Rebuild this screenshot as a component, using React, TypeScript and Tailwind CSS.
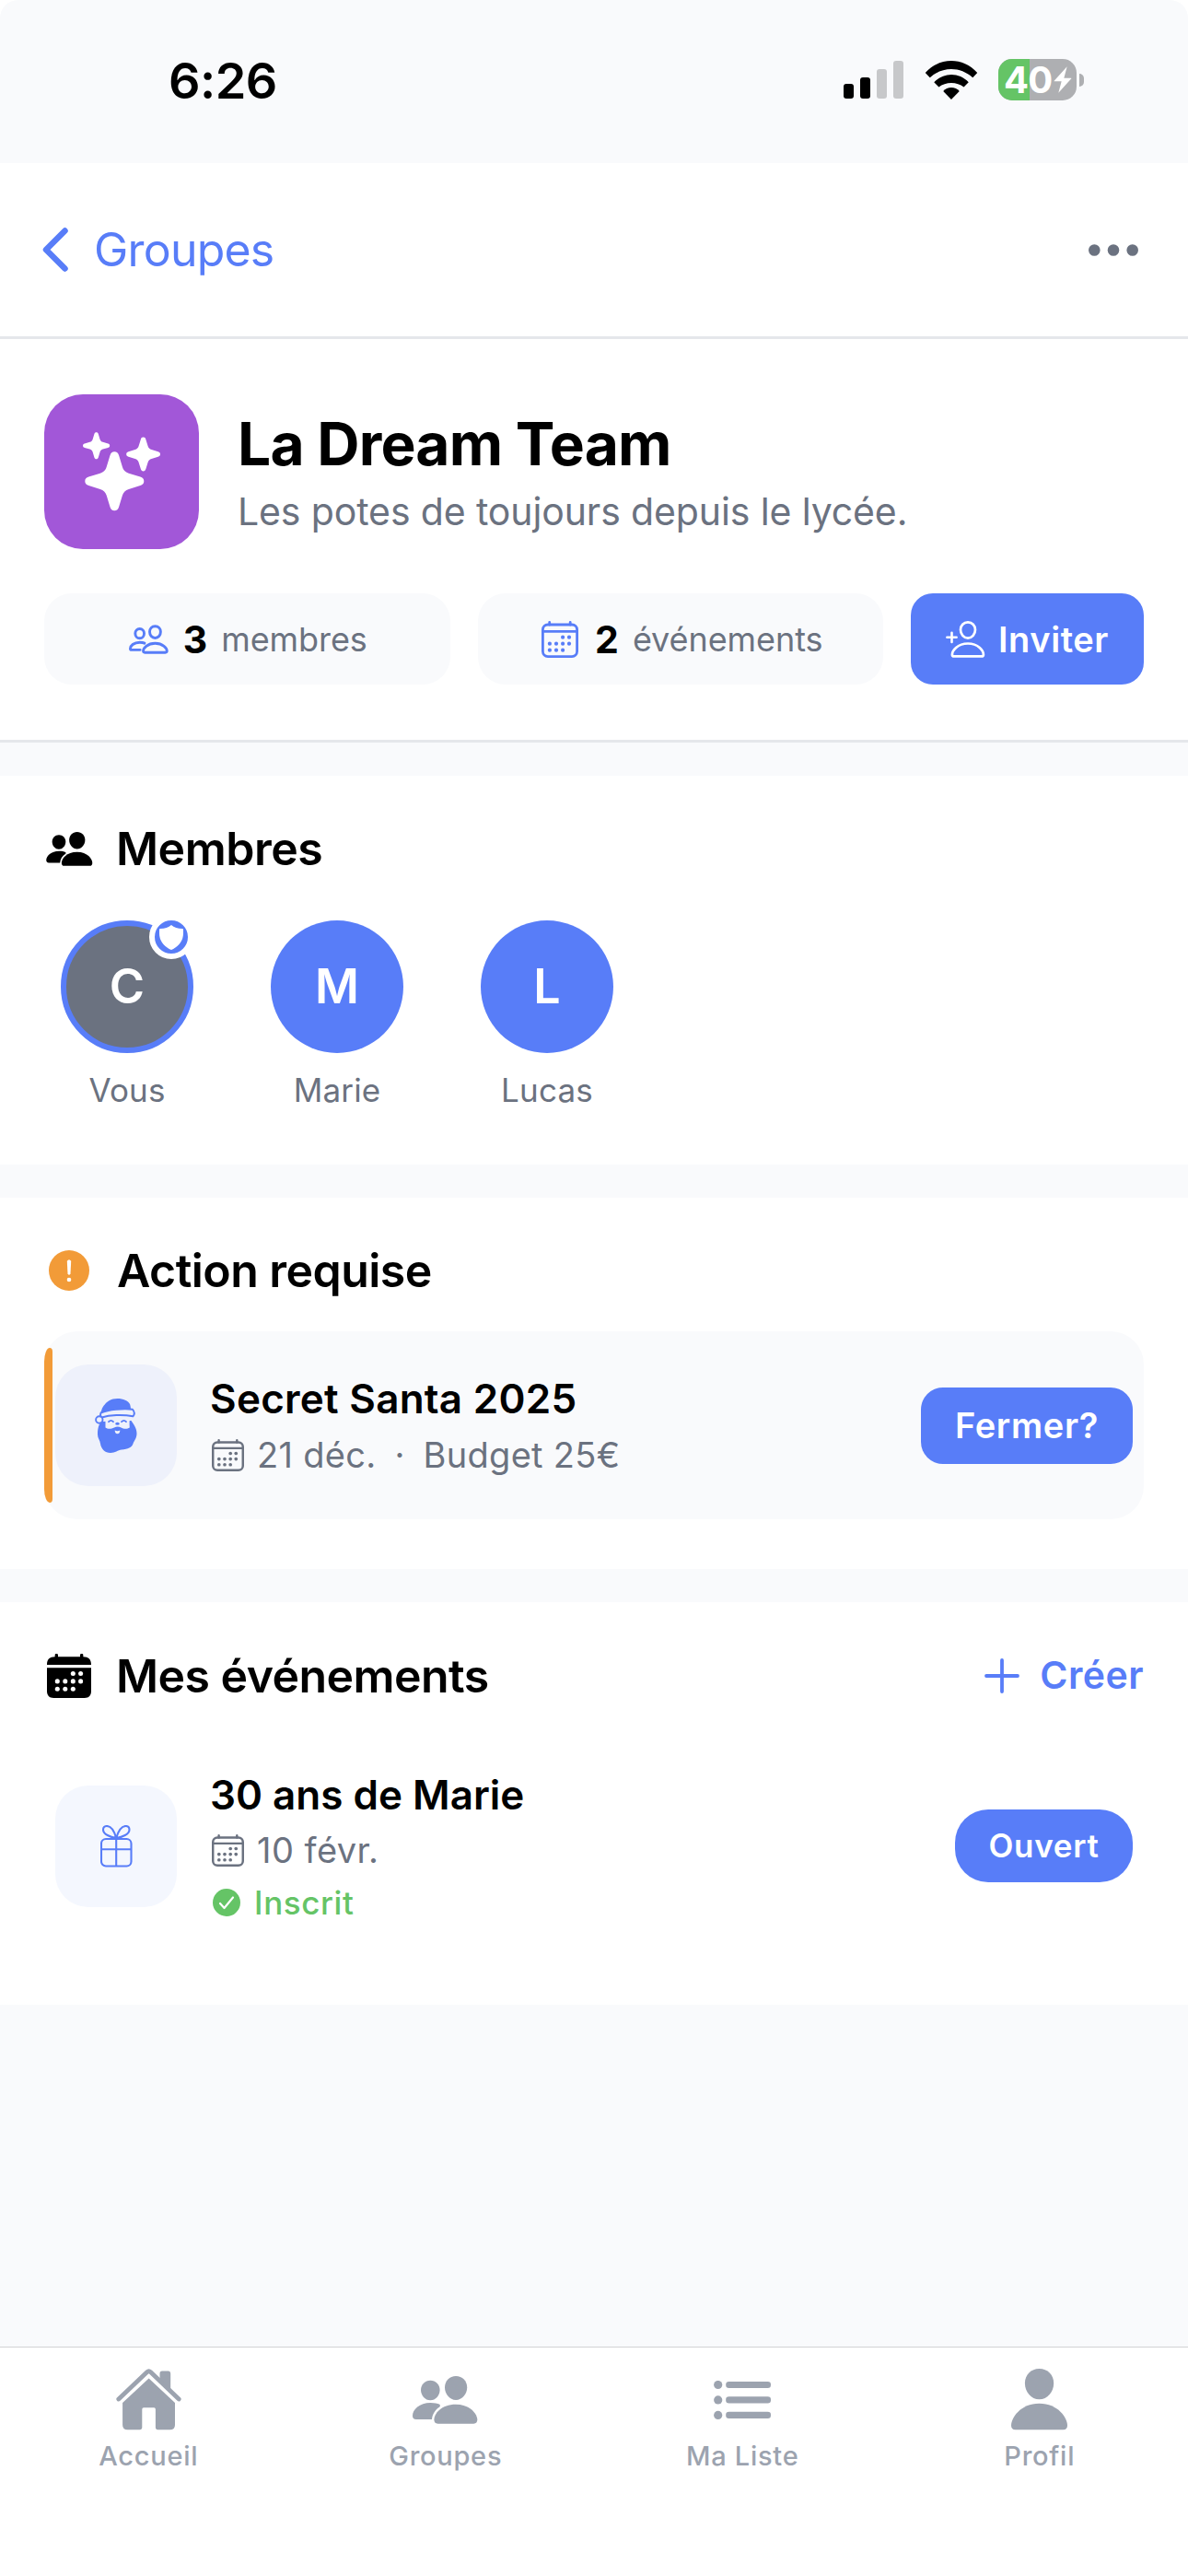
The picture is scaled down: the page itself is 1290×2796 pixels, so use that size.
import React from 'react'

type IconProps = { className?: string }

function PeopleFill({ className }: IconProps) {
  return (
    <svg viewBox="0 0 71 52" className={className} fill="currentColor">
      <path d="M47 0C54 0 59.2 5.4 59.2 12.3C59.2 19.5 53.8 26 47 26C40.3 26 35 19.5 35 12.3C35 5.4 40.2 0 47 0Z" />
      <path d="M19.3 4.7C25 4.7 29.6 9.2 29.6 15C29.6 21 25 26.3 19.3 26.3C13.6 26.3 9 21 9 15C9 9.2 13.6 4.7 19.3 4.7Z" />
      <path d="M27.5 51.7C24.5 51.7 23.4 49.8 23.4 47.3C23.4 41 31 30.7 47 30.7C63 30.7 70.3 41.5 70.3 47.3C70.3 50 69 51.7 66.3 51.7Z" />
      <path d="M4 47C1.2 47 0 45.6 0 43C0 36.5 7.5 29 19.5 29C23.6 29 27 29.7 29.4 30.8Q30.6 32 29.4 33.4C24 36.6 21.4 42 21 47Z" />
    </svg>
  )
}

function People({ className }: IconProps) {
  return (
    <svg viewBox="0 0 71 52" className={className} fill="none" stroke="currentColor" strokeWidth="4.8" strokeLinejoin="round" strokeLinecap="round">
      <path d="M47 2.4C53 2.4 56.8 6.8 56.8 12.5C56.8 18.6 52.6 23.6 47 23.6C41.4 23.6 37.2 18.6 37.2 12.5C37.2 6.8 41 2.4 47 2.4Z" />
      <path d="M19.3 7C24 7 27.3 10.5 27.3 15.2C27.3 20 24 24 19.3 24C14.6 24 11.3 20 11.3 15.2C11.3 10.5 14.6 7 19.3 7Z" />
      <path d="M28.5 49.4C26.2 49.4 25.7 48.3 25.7 46.8C25.7 42 33 33 47 33C61 33 68.1 42 68.1 46.8C68.1 48.3 67.500 49.4 65.2 49.4Z" />
      <path d="M20 44.800H5C2.9 44.800 2.4 44 2.4 42.500C2.4 37.500 8.500 31.300 19.500 31.300C23 31.300 26 31.800 28 32.800" />
    </svg>
  )
}

const dots = [
  [23.1, 17.7], [30, 17.7],
  [8.9, 24.7], [16, 24.7], [23.1, 24.7], [30, 24.7],
  [8.9, 31.7], [16, 31.7], [23.1, 31.7],
]

function Calendar({ className }: IconProps) {
  return (
    <svg viewBox="0 0 40 40" className={className} fill="none" stroke="currentColor" strokeWidth="2.8">
      <rect x="1.4" y="4" width="37.2" height="34.6" rx="5.5" />
      <path d="M1.4 11.3H38.5" />
      <path d="M8.7 1.4V4M31.200 1.4V4" strokeLinecap="round" />
      {dots.map(([x, y]) => (
        <circle key={x + '-' + y} cx={x} cy={y} r="2.1" fill="currentColor" stroke="none" />
      ))}
    </svg>
  )
}

function CalendarFill({ className }: IconProps) {
  return (
    <svg viewBox="0 0 40 40" className={className} fill="currentColor">
      <path d="M0 10C0 5 2.5 2.8 7.2 2.8V1.3A1.4 1.4 0 0 1 10 1.3V2.8H30V1.3A1.4 1.4 0 0 1 32.8 1.3V2.8C37.5 2.8 40 5 40 10Z" />
      <path d="M0 12.8H40V34C40 37.8 37.8 40 34 40H6C2.2 40 0 37.8 0 34Z" />
      {dots.map(([x, y]) => (
        <circle key={x + '-' + y} cx={x + 0.5} cy={y + 0.2} r="2.1" fill="white" />
      ))}
    </svg>
  )
}

function PersonAdd({ className }: IconProps) {
  return (
    <svg viewBox="0 0 43 40" className={className} fill="none" stroke="currentColor" strokeWidth="2.7" strokeLinecap="round" strokeLinejoin="round">
      <path d="M24 1.4C28.6 1.4 32 5 32 9.6C32 14.5 28.5 18.6 24 18.6C19.5 18.6 16 14.5 16 9.6C16 5 19.4 1.4 24 1.4Z" />
      <path d="M9 38.4C7.4 38.4 6.9 37.7 6.9 36.4C6.9 32.5 12.5 24.5 24 24.5C35.5 24.5 40.9 32.5 40.9 36.4C40.9 37.7 40.4 38.4 38.8 38.4Z" />
      <path d="M1.4 17.8H11.6M6.5 12.8V22.9" strokeWidth="2.6" />
    </svg>
  )
}

function Sparkles({ className }: IconProps) {
  const star =
    'M0 -32C2.5 -32 4 -30.6 4.8 -28L8.6 -15.5C9.6 -12 12 -9.6 15.5 -8.6L28 -4.8C30.6 -4 32 -2.5 32 0C32 2.5 30.6 4 28 4.8L15.5 8.6C12 9.6 9.6 12 8.6 15.5L4.8 28C4 30.6 2.5 32 0 32C-2.5 32 -4 30.6 -4.8 28L-8.6 15.5C-9.6 12 -12 9.6 -15.5 8.6L-28 4.8C-30.6 4 -32 2.5 -32 0C-32 -2.5 -30.6 -4 -28 -4.8L-15.5 -8.6C-12 -9.6 -9.6 -12 -8.6 -15.5L-4.8 -28C-4 -30.6 -2.5 -32 0 -32Z'
  return (
    <svg viewBox="48 428 168 168" className={className} fill="currentColor">
      <path d={star} transform="translate(124.3 522.3)" />
      <path d={star} transform="translate(104.6 483.7) scale(0.455)" />
      <path d={star} transform="translate(155.6 493) scale(0.575)" />
    </svg>
  )
}

function Santa({ className }: IconProps) {
  return (
    <svg viewBox="0 0 46 59" className={className}>
      <path fill="currentColor" d="M7 25C3.5 29 3 34 3 39C3 43 5.5 45 6 49C7 55 11 59 17 59C22 59 25 56 29 55.5C36 55 40 53 41.5 49C42.5 46 45.5 43 45.5 38C45.5 32 42 28 39.5 24Z" />
      <path fill="#eef1fb" d="M11.5 20C18 18.5 31 18 38 19.5C37.5 24 37.5 28 37.8 31.5C35 33.5 31 33 28.5 31.5C26 30 23.5 30 21 31.5C18 33 14 33.5 11.5 31.5Z" />
      <path fill="currentColor" d="M6.5 15C8 8 14 0 24.5 0C31 0 36 2.5 38 6C39 9 39 11 39 14Z" />
      <path fill="#eef1fb" stroke="currentColor" strokeWidth="1.9" d="M6.5 15.5C15 12 31 10.5 41 11.8C43 14 43.2 17 41.5 19.3C30 17 16 17.8 7.5 20.5C6 19.5 5.7 17.5 6.5 15.5Z" />
      <circle cx="4.8" cy="23" r="3.7" fill="#eef1fb" stroke="currentColor" strokeWidth="1.9" />
      <path fill="none" stroke="currentColor" strokeWidth="1.8" strokeLinecap="round" d="M15 25.2Q17.5 22.4 20 25.2M29 25.2Q31.5 22.4 34 25.2" />
      <ellipse cx="24.5" cy="27.2" rx="2.3" ry="1.5" fill="currentColor" />
      <path fill="#eef1fb" d="M21.7 34.5Q24.5 36 27.3 34.5Q27.3 38 24.5 38.3Q21.7 38 21.7 34.5Z" />
    </svg>
  )
}

function Gift({ className }: IconProps) {
  return (
    <svg viewBox="0 0 35 46" className={className} fill="none" stroke="currentColor" strokeWidth="2.1" strokeLinejoin="round">
      <rect x="1" y="15" width="32.5" height="29.5" rx="5" />
      <path d="M17.2 14V44.5M1 26.2H33.5" />
      <path d="M17.2 14C11 13 3 10 3 5C3 2.5 4.5 1 7 1C12 1 15.5 8 17.2 14C19 8 22.5 1 27.5 1C30 1 31.5 2.5 31.5 5C31.5 10 23.5 13 17.2 14Z" />
    </svg>
  )
}

function Home({ className }: IconProps) {
  return (
    <svg viewBox="0 0 71 67" className={className} fill="currentColor">
      <path d="M47.5 13V5Q47.5 2.5 50 2.5H57Q59.2 2.5 59.2 5V25Z" />
      <path d="M2.8 33L33.8 3.6Q35.6 2 37.4 3.6L68.2 33" fill="none" stroke="currentColor" strokeWidth="4.8" strokeLinecap="round" />
      <path d="M35.6 10.5L64 37V61Q64 66.3 58.5 66.3H45.5Q42.9 66.3 42.9 63.5V44Q42.9 42.3 41.2 42.3H30Q28.3 42.3 28.3 44V63.5Q28.3 66.3 25.7 66.3H12.5Q7.1 66.3 7.1 61V37Z" />
    </svg>
  )
}

function ListBullet({ className }: IconProps) {
  return (
    <svg viewBox="0 0 62 42" className={className} fill="currentColor">
      {[4.5, 20.9, 37.4].map((y) => (
        <g key={y}>
          <circle cx="4.7" cy={y} r="4.6" />
          <rect x="13.2" y={y - 3.6} width="48.8" height="7.2" rx="3.3" />
        </g>
      ))}
    </svg>
  )
}

function PersonFill({ className }: IconProps) {
  return (
    <svg viewBox="0 0 61 67" className={className} fill="currentColor">
      <path d="M30.5 0C39.5 0 46.2 6.8 46.2 15.7C46.2 25 39.2 33.3 30.5 33.3C21.8 33.3 14.9 25 14.9 15.7C14.9 6.8 21.6 0 30.5 0Z" />
      <path d="M4.5 66.3C1.5 66.3 0 64.5 0 61.8C0 53.5 10 37.8 30.5 37.8C51 37.8 61 53.5 61 61.8C61 64.5 59.5 66.3 56.5 66.3Z" />
    </svg>
  )
}

function StatusBar() {
  return (
    <div className="flex h-[177px] items-start justify-between bg-[#f9fafc] pl-[183px] pr-[113px] pt-[60px] rounded-t-[20px]">
      <p className="text-[54px] font-semibold leading-[56px] tracking-[-0.01em]">6:26</p>
      <div className="flex items-center pt-[4px]">
        <div className="flex h-[41px] items-end gap-[7px]">
          <div className="h-[16px] w-[11px] rounded-[3px] bg-black"></div>
          <div className="h-[23px] w-[11px] rounded-[3px] bg-black"></div>
          <div className="h-[32px] w-[11px] rounded-[3px] bg-[#c7c8ca]"></div>
          <div className="h-[41px] w-[11px] rounded-[3px] bg-[#c7c8ca]"></div>
        </div>
        <svg viewBox="0 0 57.5 42" className="ml-[23px] h-[42px] w-[58px]">
          <path d="M0.5 13C16 -4.3 41.4 -4.3 57 13L52 18.3C38.5 5.9 19 5.9 5.5 18.3Z" />
          <path d="M10 23.3C20 12.2 37.5 12.2 47.5 23.3L42.3 28.5C35 22.5 22.5 22.5 15.2 28.5Z" />
          <path d="M20 33C24 27.7 33.5 27.7 37.5 33L28.7 42Z" />
        </svg>
        <div className="relative ml-[22px] flex h-[45px] w-[85px] items-center rounded-[15px] bg-[#aeafb2]">
          <div className="h-[45px] w-[34px] rounded-l-[15px] bg-[#65c466]"></div>
          <span className="absolute left-[6px] text-[40px] font-bold leading-[49px] tracking-[-0.02em] text-white">40</span>
          <svg viewBox="0 0 58 87" className="absolute right-[5px] h-[29px] w-[20px]">
            <path d="M43 1L1 47Q0 49 2 49H25L15 86L57 40Q58 38 56 38H33Z" fill="white" />
          </svg>
        </div>
        <div className="ml-[3px] h-[14px] w-[5px] rounded-r-full bg-[#aeafb2]"></div>
      </div>
    </div>
  )
}

function Member({ letter, name, me }: { letter: string; name: string; me?: boolean }) {
  return (
    <div className="flex w-[180px] flex-col items-center">
      <div className={me
        ? 'relative flex size-36 items-center justify-center rounded-full border-6 border-[#587df8] bg-[#6b7280]'
        : 'flex size-36 items-center justify-center rounded-full bg-[#587df8]'}>
        <span className="text-[52px] font-semibold leading-[64px] text-white">{letter}</span>
        {me && (
          <div className="absolute -right-[6px] -top-[12px] flex size-12 items-center justify-center rounded-full border-6 border-white bg-[#587df8]">
            <svg viewBox="0 0 26 27" className="h-[27px] w-[26px]">
              <path d="M13 0C16 2.5 20 4 25 4Q26 4 26 5V9C26 18 20 24 13 27C6 24 0 18 0 9V5Q0 4 1 4C6 4 10 2.5 13 0Z" fill="white" />
            </svg>
          </div>
        )}
      </div>
      <p className="mt-[18px] text-[35px] leading-[45px] tracking-[0.005em] text-[#6b7280]">{name}</p>
    </div>
  )
}

function Tab({ label, children }: { label: string; children: React.ReactNode }) {
  return (
    <div className="flex flex-col items-center">
      <div className="flex h-[67px] items-center">{children}</div>
      <p className="mt-[9px] text-[29px] font-medium leading-[37px] tracking-[0.025em]">{label}</p>
    </div>
  )
}

export default function App() {
  return (
    <div className="bg-white">
      <div className="flex h-[2796px] w-[1290px] flex-col overflow-hidden rounded-t-[20px] bg-[#f9fafc] font-['Inter',sans-serif] text-black">
        <StatusBar />

        {/* header */}
        <header className="flex h-[191px] items-center justify-between border-b-3 border-[#e5e7eb] bg-white pl-[46px] pr-[54px]">
          <div className="flex items-center text-[#587df8]">
            <svg viewBox="0 0 28 48" className="h-[48px] w-[28px]" fill="none" stroke="currentColor" strokeWidth="6.5" strokeLinecap="round" strokeLinejoin="round">
              <path d="M24.5 3.5L4 24L24.5 44.5" />
            </svg>
            <span className="ml-[28px] text-[50px] leading-[60px] tracking-[-0.016em]">Groupes</span>
          </div>
          <svg viewBox="0 0 54 13" className="h-[13px] w-[54px]" fill="#6b7280">
            <circle cx="6.3" cy="6.5" r="6.3" />
            <circle cx="27" cy="6.5" r="6.3" />
            <circle cx="47.7" cy="6.5" r="6.3" />
          </svg>
        </header>

        {/* group */}
        <section className="border-b-3 border-[#e5e7eb] bg-white px-12 py-[60px]">
          <div className="flex items-center">
            <div className="size-[168px] rounded-[42px] bg-[#a257d8] text-white">
              <Sparkles className="size-[168px]" />
            </div>
            <div className="ml-[42px]">
              <h1 className="text-[64px] font-bold leading-[78px] tracking-[-0.012em]">La Dream Team</h1>
              <p className="mt-[7px] text-[41px] leading-[54px] tracking-[-0.003em] text-[#6b7280]">Les potes de toujours depuis le lycée.</p>
            </div>
          </div>
          <div className="mt-12 flex h-[99px] gap-[30px]">
            <div className="flex flex-1 items-center justify-center rounded-[30px] bg-[#f9fafc]">
              <People className="mx-[2px] h-[32px] w-[43px] text-[#587df8]" />
              <span className="ml-[14px] text-[41px] font-bold leading-[54px]">3</span>
              <span className="ml-[15px] text-[36px] leading-[48px] tracking-[-0.002em] text-[#6b7280]">membres</span>
            </div>
            <div className="flex flex-1 items-center justify-center rounded-[30px] bg-[#f9fafc]">
              <Calendar className="mx-[4px] size-[40px] text-[#587df8]" />
              <span className="ml-[14px] text-[41px] font-bold leading-[54px]">2</span>
              <span className="ml-[15px] text-[36px] leading-[48px] tracking-[-0.002em] text-[#6b7280]">événements</span>
            </div>
            <div className="flex w-[253px] items-center justify-center rounded-[24px] bg-[#587df8] text-white">
              <PersonAdd className="h-[40px] w-[43px]" />
              <span className="ml-[14px] text-[38px] font-semibold leading-[48px] tracking-[0.015em]">Inviter</span>
            </div>
          </div>
        </section>

        {/* members */}
        <section className="mt-9 h-[422px] bg-white px-12 pt-[43px]">
          <div className="flex h-[72px] items-center">
            <div className="flex w-[54px] justify-center"><PeopleFill className="h-[37px] w-[51px]" /></div>
            <h2 className="ml-[24px] text-[50px] font-semibold leading-[72px] tracking-[-0.01em]">Membres</h2>
          </div>
          <div className="mt-[42px] flex gap-12">
            <Member letter="C" name="Vous" me />
            <Member letter="M" name="Marie" />
            <Member letter="L" name="Lucas" />
          </div>
        </section>

        {/* action */}
        <section className="mt-9 h-[403px] bg-white px-12 pt-[43px]">
          <div className="flex h-[72px] items-center">
            <div className="flex w-[54px] justify-center">
              <svg viewBox="0 0 44 44" className="size-11">
                <circle cx="22" cy="22" r="22" fill="#f29b38" />
                <path d="M19.8 11.8Q22 8.8 24.2 11.8L23.5 25.5Q22 28 20.5 25.5Z" fill="white" />
                <circle cx="22" cy="32" r="2.3" fill="white" />
              </svg>
            </div>
            <h2 className="ml-[25px] text-[50px] font-semibold leading-[72px] tracking-[-0.011em]">Action requise</h2>
          </div>
          <div className="relative mt-[30px] flex h-[204px] items-center rounded-[36px] bg-[#f9fafc] px-3">
            <div className="absolute bottom-[18px] left-0 top-[18px] w-[9px] bg-[#f29b38] [border-radius:6px_3px_3px_6px/15px_4px_4px_15px]"></div>
            <div className="flex size-33 items-center justify-center rounded-[36px] bg-[#eef1fb]">
              <Santa className="h-[59px] w-[46px] text-[#587df8]" />
            </div>
            <div className="ml-9 flex-1">
              <h3 className="text-[44px] font-semibold leading-[54px] tracking-[0.006em]">Secret Santa 2025</h3>
              <div className="mt-[10px] flex items-center text-[38px] leading-[48px] text-[#6b7280]">
                <Calendar className="ml-[2px] size-[35px]" />
                <span className="ml-[14px] tracking-[0.008em]">21 déc.</span>
                <span className="w-[51px] text-center">·</span>
                <span className="tracking-[0.008em]">Budget 25€</span>
              </div>
            </div>
            <div className="flex h-[83px] w-[230px] items-center justify-center rounded-[24px] bg-[#587df8] text-[38px] font-semibold tracking-[0.018em] text-white">Fermer?</div>
          </div>
        </section>

        {/* events */}
        <section className="mt-9 h-[437px] bg-white px-12 pt-[44px]">
          <div className="flex h-[72px] items-center">
            <div className="flex w-[54px] justify-center"><CalendarFill className="size-12" /></div>
            <h2 className="ml-[24px] text-[50px] font-semibold leading-[72px] tracking-[-0.011em]">Mes événements</h2>
            <div className="ml-auto flex items-center text-[#587df8]">
              <svg viewBox="0 0 38 38" className="size-[38px]" stroke="currentColor" strokeWidth="3.8" strokeLinecap="round">
                <path d="M2 19H36M19 2V36" />
              </svg>
              <span className="-mt-[2px] ml-[22px] text-[41px] font-semibold leading-[54px] tracking-[0.012em]">Créer</span>
            </div>
          </div>
          <div className="mt-[30px] flex items-center px-3 py-9">
            <div className="flex size-33 items-center justify-center rounded-[36px] bg-[#f4f7fe]">
              <Gift className="h-[46px] w-[35px] text-[#587df8]" />
            </div>
            <div className="ml-9 flex-1">
              <h3 className="text-[44px] font-semibold leading-[54px]">30 ans de Marie</h3>
              <div className="mt-[9px] flex items-center text-[38px] leading-[48px] text-[#6b7280]">
                <Calendar className="ml-[2px] size-[35px]" />
                <span className="ml-[14px] tracking-[0.012em]">10 févr.</span>
              </div>
              <div className="mt-[12px] flex items-center text-[35px] font-medium leading-[42px] text-[#65c466]">
                <svg viewBox="0 0 30 30" className="ml-[3px] size-[30px]">
                  <circle cx="15" cy="15" r="15" fill="currentColor" />
                  <path d="M8 16L12.5 21L22 9.5" fill="none" stroke="white" strokeWidth="2.2" strokeLinecap="round" strokeLinejoin="round" />
                </svg>
                <span className="ml-[15px] tracking-[0.017em]">Inscrit</span>
              </div>
            </div>
            <div className="flex h-[79px] w-[193px] items-center justify-center rounded-[36px] bg-[#587df8] text-[35px] font-semibold tracking-[0.02em] text-white">Ouvert</div>
          </div>
        </section>

        {/* tabs */}
        <nav className="mt-auto grid h-[249px] grid-cols-4 border-t border-[#d1d2d4] bg-white pt-[23px] text-[#9ca3af]">
          <Tab label="Accueil"><Home className="h-[67px] w-[71px]" /></Tab>
          <Tab label="Groupes"><PeopleFill className="h-[52px] w-[71px]" /></Tab>
          <Tab label="Ma Liste"><ListBullet className="h-[42px] w-[62px]" /></Tab>
          <Tab label="Profil"><PersonFill className="h-[67px] w-[61px]" /></Tab>
        </nav>
      </div>
    </div>
  )
}
